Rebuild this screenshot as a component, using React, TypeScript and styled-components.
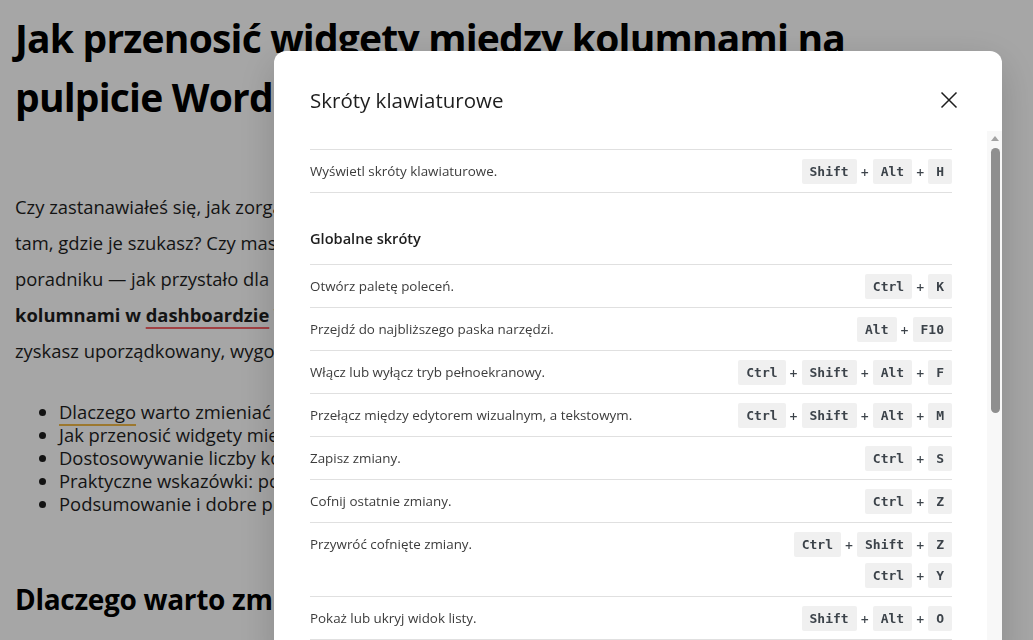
import { createGlobalStyle } from "styled-components";
import styled from "styled-components";
import { Fragment } from "react";

const GlobalStyle = createGlobalStyle`
	html, body {
		margin: 0;
		padding: 0;
		background: #fff;
		overflow: hidden;
	}
	body {
		font-family: "Open Sans", "Noto Sans", sans-serif;
		color: #1e1e1e;
	}
`;

const Article = styled.article`
	padding: 0 15px;
	width: 880px;
	h1 {
		font-size: 39px;
		line-height: 59px;
		font-weight: 700;
		margin: 8px 0 0;
		color: #000;
		letter-spacing: -0.8px;
	}
	h2 {
		font-size: 28px;
		line-height: 36px;
		font-weight: 700;
		margin: 66px 0 0;
		color: #000;
		letter-spacing: -0.3px;
	}
	p {
		font-size: 18.4px;
		line-height: 36px;
		margin: 63px 0 0;
		white-space: nowrap;
	}
	ul {
		margin: 31px 0 0;
		padding-left: 44px;
		font-size: 18.4px;
		line-height: 23px;
	}
`;

const UnderLink = styled.a<{ $line: string }>`
	color: inherit;
	text-decoration: underline;
	text-decoration-color: ${(p) => p.$line};
	text-decoration-thickness: 2px;
	text-underline-offset: 5px;
`;

const Overlay = styled.div`
	position: fixed;
	inset: 0;
	background: rgba(0, 0, 0, 0.35);
`;

const Modal = styled.div`
	position: fixed;
	left: 274px;
	top: 51px;
	width: 728px;
	height: 620px;
	background: #fff;
	border-radius: 12px;
	box-shadow: 0 12px 40px rgba(0, 0, 0, 0.18);
	display: flex;
	flex-direction: column;
	overflow: hidden;
`;

const ModalHeader = styled.div`
	height: 80px;
	box-sizing: border-box;
	padding: 18px 41px 0 36px;
	display: flex;
	align-items: center;
	justify-content: space-between;
	flex-shrink: 0;
	h2 {
		margin: 0;
		font-size: 20.5px;
		font-weight: 400;
		color: #1e1e1e;
	}
`;

const CloseButton = styled.button`
	width: 24px;
	height: 24px;
	padding: 0;
	border: none;
	background: none;
	display: flex;
	align-items: center;
	justify-content: center;
	color: #1e1e1e;
`;

const ModalBody = styled.div`
	flex: 1;
	display: flex;
	min-height: 0;
`;

const ScrollContent = styled.div`
	flex: 1;
	overflow: hidden;
	padding: 18px 35px 24px 36px;
`;

const ScrollTrack = styled.div`
	width: 15px;
	flex-shrink: 0;
	background: #f8f8f8;
	display: flex;
	flex-direction: column;
	align-items: center;
	padding-top: 5px;
`;

const ScrollArrow = styled.span`
	width: 0;
	height: 0;
	border-left: 4.5px solid transparent;
	border-right: 4.5px solid transparent;
	border-bottom: 5px solid #a3a3a3;
	margin-bottom: 7px;
`;

const ScrollThumb = styled.span<{ $size: number }>`
	width: 9px;
	height: ${(p) => p.$size}px;
	background: #8f8f8f;
	border-radius: 5px;
	margin-left: 1px;
`;

const Section = styled.section``;

const SectionTitle = styled.h3`
	margin: 35px 0 16px;
	font-size: 14.6px;
	line-height: 20px;
	font-weight: 600;
	color: #1e1e1e;
`;

const ShortcutList = styled.ul`
	list-style: none;
	margin: 0;
	padding: 0;
	border-bottom: 1px solid #e0e0e0;
`;

const ShortcutRow = styled.li`
	display: flex;
	justify-content: space-between;
	align-items: flex-start;
	border-top: 1px solid #e0e0e0;
	padding: 9px 0 8px;
`;

const Description = styled.span`
	font-size: 13.4px;
	line-height: 25px;
	color: #3c3c3c;
`;

const Combos = styled.div`
	display: flex;
	flex-direction: column;
	align-items: flex-end;
	gap: 6px;
`;

const Combo = styled.div`
	display: flex;
	align-items: center;
	height: 25px;
`;

const Key = styled.kbd`
	display: inline-block;
	height: 25px;
	line-height: 25px;
	padding: 0 8px;
	background: #f0f0f0;
	border-radius: 2px;
	font-family: "DejaVu Sans Mono", "Liberation Mono", monospace;
	font-size: 13px;
	font-weight: 700;
	color: #3c434a;
`;

const Plus = styled.span`
	width: 16px;
	text-align: center;
	font-size: 14px;
	font-weight: 600;
	line-height: 23px;
	padding-top: 2px;
	color: #3c434a;
`;

type Shortcut = { label: string; keys: string[][] };

const sections: { title?: string; items: Shortcut[] }[] = [
	{
		items: [{ label: "Wyświetl skróty klawiaturowe.", keys: [["Shift", "Alt", "H"]] }],
	},
	{
		title: "Globalne skróty",
		items: [
			{ label: "Otwórz paletę poleceń.", keys: [["Ctrl", "K"]] },
			{ label: "Przejdź do najbliższego paska narzędzi.", keys: [["Alt", "F10"]] },
			{ label: "Włącz lub wyłącz tryb pełnoekranowy.", keys: [["Ctrl", "Shift", "Alt", "F"]] },
			{ label: "Przełącz między edytorem wizualnym, a tekstowym.", keys: [["Ctrl", "Shift", "Alt", "M"]] },
			{ label: "Zapisz zmiany.", keys: [["Ctrl", "S"]] },
			{ label: "Cofnij ostatnie zmiany.", keys: [["Ctrl", "Z"]] },
			{ label: "Przywróć cofnięte zmiany.", keys: [["Ctrl", "Shift", "Z"], ["Ctrl", "Y"]] },
			{ label: "Pokaż lub ukryj widok listy.", keys: [["Shift", "Alt", "O"]] },
			{ label: "Pokaż lub ukryj panel ustawień.", keys: [["Ctrl", "Shift", ","]] },
		],
	},
];

const CloseIcon = () => (
	<svg width="24" height="24" viewBox="0 0 24 24" fill="none">
		<path d="M4.5 4.5L19.5 19.5M19.5 4.5L4.5 19.5" stroke="currentColor" strokeWidth="1.5" />
	</svg>
);

const App = () => {
	return (
		<>
			<GlobalStyle />
			<Article>
				<h1>Jak przenosić widgety między kolumnami na pulpicie WordPress</h1>
				<p>
					Czy zastanawiałeś się, jak zorganizować widgety na pulpicie WordPress tak, aby najważniejsze informacje były
					<br />
					tam, gdzie je szukasz? Czy masz dość przewijania, żeby dotrzeć do statystyk lub szkiców? W tym
					<br />
					poradniku — jak przystało dla praktycznego przewodnika — pokażę krok po kroku, <b>jak przenosić widgety między</b>
					<br />
					<b>
						kolumnami w <UnderLink href="#" $line="#f86368">dashboardzie</UnderLink> WordPress
					</b>
					, jak zmienić liczbę kolumn i na co zwrócić uwagę. Dzięki temu
					<br />
					zyskasz uporządkowany, wygodny pulpit dopasowany do Twojej pracy.
				</p>
				<ul>
					<li>
						<UnderLink href="#" $line="#f0b849">Dlaczego</UnderLink> warto zmieniać układ widgetów?
					</li>
					<li>Jak przenosić widgety między kolumnami</li>
					<li>Dostosowywanie liczby kolumn na pulpicie</li>
					<li>Praktyczne wskazówki: porządek i czytelność</li>
					<li>Podsumowanie i dobre praktyki</li>
				</ul>
				<h2>Dlaczego warto zmieniać układ widgetów?</h2>
			</Article>
			<Overlay />
			<Modal role="dialog" aria-label="Skróty klawiaturowe">
				<ModalHeader>
					<h2>Skróty klawiaturowe</h2>
					<CloseButton aria-label="Zamknij">
						<CloseIcon />
					</CloseButton>
				</ModalHeader>
				<ModalBody>
					<ScrollContent>
						{sections.map((section, i) => (
							<Section key={i}>
								{section.title && <SectionTitle>{section.title}</SectionTitle>}
								<ShortcutList>
									{section.items.map((item) => (
										<ShortcutRow key={item.label}>
											<Description>{item.label}</Description>
											<Combos>
												{item.keys.map((combo, j) => (
													<Combo key={j}>
														{combo.map((k, n) => (
															<Fragment key={k + n}>
																{n > 0 && <Plus>+</Plus>}
																<Key>{k}</Key>
															</Fragment>
														))}
													</Combo>
												))}
											</Combos>
										</ShortcutRow>
									))}
								</ShortcutList>
							</Section>
						))}
					</ScrollContent>
					<ScrollTrack>
						<ScrollArrow />
						<ScrollThumb $size={265} />
					</ScrollTrack>
				</ModalBody>
			</Modal>
		</>
	);
};

export default App;
